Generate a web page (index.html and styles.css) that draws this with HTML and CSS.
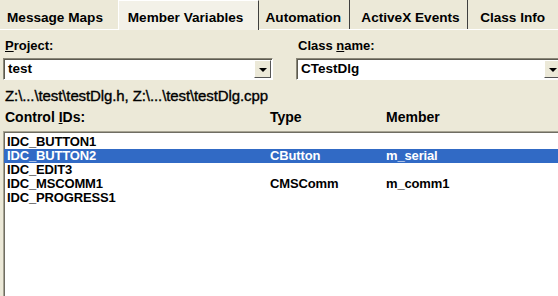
FILE: index.html
```html
<!DOCTYPE html>
<html>
<head>
<meta charset="utf-8">
<link rel="stylesheet" href="styles.css">
</head>
<body>
<div class="dialog">
  <div class="tabs">
    <div class="tab tab-mm">Message Maps</div>
    <div class="tab tab-mv active">Member Variables</div>
    <div class="tab tab-au">Automation</div>
    <div class="tab tab-ax">ActiveX Events</div>
    <div class="tab tab-ci">Class Info</div>
  </div>
  <div class="form">
    <div class="field">
      <div class="label"><u>P</u>roject:</div>
      <div class="combo combo-left">
        <span class="combo-text">test</span>
        <span class="combo-btn"><span class="arrow"></span></span>
      </div>
    </div>
    <div class="field field-right">
      <div class="label">Class <u>n</u>ame:</div>
      <div class="combo combo-right">
        <span class="combo-text">CTestDlg</span>
        <span class="combo-btn"><span class="arrow"></span></span>
      </div>
    </div>
  </div>
  <div class="path">Z:\...\test\testDlg.h, Z:\...\test\testDlg.cpp</div>
  <div class="headers">
    <span class="col-id">Control <u>I</u>Ds:</span>
    <span class="col-type">Type</span>
    <span class="col-member">Member</span>
  </div>
  <div class="list">
    <div class="row"><span class="col-id">IDC_BUTTON1</span><span class="col-type"></span><span class="col-member"></span></div>
    <div class="row selected"><span class="col-id">IDC_BUTTON2</span><span class="col-type">CButton</span><span class="col-member">m_serial</span></div>
    <div class="row"><span class="col-id">IDC_EDIT3</span><span class="col-type"></span><span class="col-member"></span></div>
    <div class="row"><span class="col-id">IDC_MSCOMM1</span><span class="col-type">CMSComm</span><span class="col-member">m_comm1</span></div>
    <div class="row"><span class="col-id">IDC_PROGRESS1</span><span class="col-type"></span><span class="col-member"></span></div>
  </div>
</div>
</body>
</html>
```

FILE: styles.css
```css
html, body {
  margin: 0;
  padding: 0;
  background: #ECE9D8;
  overflow: hidden;
}
.dialog {
  width: 558px;
  height: 296px;
  font-family: "Liberation Sans", Arial, sans-serif;
  font-weight: bold;
  font-size: 13px;
  color: #000;
  display: flex;
  flex-direction: column;
}
.tabs {
  display: flex;
  height: 30px;
  border-bottom: 1px solid #fff;
  box-sizing: border-box;
  flex: none;
  font-size: 13.6px;
}
.tab {
  padding: 10px 0 0 7px;
  line-height: 16px;
  height: 29px;
  box-sizing: border-box;
  border-right: 1px solid #3f3f3f;
  white-space: nowrap;
}
.tab-mm { width: 118px; border-right: none; }
.tab-mv { width: 141px; padding-left: 9px; }
.tab-au { width: 92px; padding-left: 7px; }
.tab-ax { width: 118px; padding-left: 11px; }
.tab-ci { width: 90px; padding-left: 12px; border-right: none; }
.tab.active {
  background: #F3F1E8;
  border-left: 1px solid #fff;
  border-top: 1px solid #fff;
  padding-top: 9px;
  height: 30px;
}
.form {
  display: grid;
  grid-template-columns: 270px 267px;
  column-gap: 23px;
  padding: 8px 0 0 3px;
  flex: none;
}
.label {
  padding-left: 2px;
  height: 20px;
  line-height: 15px;
}
.combo {
  display: flex;
  height: 22px;
  background: #fff;
  border-top: 1px solid #8a8778;
  border-left: 1px solid #8a8778;
  border-bottom: 1px solid #fff;
  border-right: 1px solid #fff;
  box-shadow: inset 1px 1px 0 #5c5a50;
  box-sizing: border-box;
}
.combo-text {
  flex: 1;
  padding-left: 4px;
  line-height: 19px;
  font-size: 13.5px;
}
.combo-btn {
  width: 17px;
  height: 18px;
  margin: 1px 1px 0 0;
  background: #ECE9D8;
  border-top: 1px solid #fff;
  border-left: 1px solid #fff;
  border-right: 1px solid #555;
  border-bottom: 1px solid #555;
  box-sizing: border-box;
  display: flex;
  align-items: center;
  justify-content: center;
}
.arrow {
  width: 0;
  height: 0;
  border-left: 4px solid transparent;
  border-right: 4px solid transparent;
  border-top: 4px solid #000;
  margin-top: 1px;
}
.path {
  padding: 7px 0 0 5px;
  height: 24px;
  line-height: 17px;
  box-sizing: border-box;
  font-weight: normal;
  font-size: 15px;
  letter-spacing: -0.1px;
  -webkit-text-stroke: 0.35px #000;
  flex: none;
}
.headers {
  display: flex;
  padding: 5px 0 0 5px;
  height: 27px;
  line-height: 16px;
  font-size: 14px;
  box-sizing: border-box;
  flex: none;
}
.col-id { width: 265px; flex: none; }
.col-type { width: 116px; flex: none; }
.col-member { flex: 1; }
.list {
  margin-left: 3px;
  flex: 1;
  background: #fff;
  border-top: 1px solid #A7A493;
  border-left: 1px solid #A7A493;
  box-shadow: inset 1px 1px 0 #6f6d62;
  padding-top: 3px;
  letter-spacing: -0.15px;
}
.row {
  display: flex;
  height: 14px;
  line-height: 14px;
  padding-left: 3px;
}
.row .col-id { width: 263px; }
.row.selected {
  background: #316AC5;
  color: #fff;
}
```
